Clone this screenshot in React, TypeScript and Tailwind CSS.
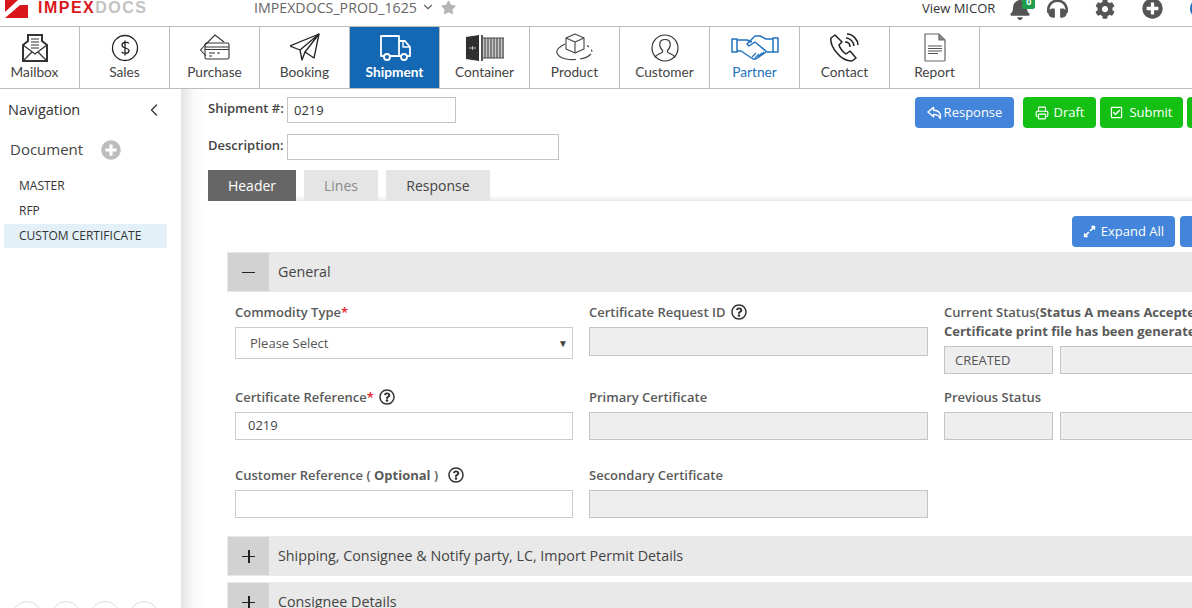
import { ReactNode } from 'react';
import { FaBell, FaHeadphones, FaCog, FaPlusCircle, FaStar, FaRegCheckSquare, FaExpandAlt, FaRegQuestionCircle } from 'react-icons/fa';
import { ChevronDown, ChevronLeft, Printer } from 'lucide-react';

const ic = 'w-[30px] h-[30px]';

const navItems: { label: string; icon: ReactNode; width: string; active?: boolean; blue?: boolean; extra?: string }[] = [
  {
    label: 'Mailbox',
    width: 'w-[80px]',
    extra: 'pr-[10px]',
    icon: (
      <svg viewBox="0 0 30 30" className={ic} fill="none" stroke="#333" strokeWidth="1.3">
        <path d="M3 12 L8 8 V2 H22 V8 L27 12 V28 H3 Z" strokeWidth="2" />
        <path d="M11 6h8M11 9h8M11 12h8M11 15h8" strokeWidth="1" />
        <path d="M3 12 L15 21 L27 12M3 28 L12 19M27 28 L18 19" />
      </svg>
    ),
  },
  {
    label: 'Sales',
    width: 'w-[90px]',
    icon: (
      <svg viewBox="0 0 30 30" className={ic} fill="none" stroke="#222" strokeWidth="1.3">
        <circle cx="15" cy="15" r="12.5" />
        <path d="M19 10.500c-1-1.500-7-2-7 1.700 0 3.600 7 2 7 5.600 0 3.400-6 3-7.400 1M15 7.500v15" />
      </svg>
    ),
  },
  {
    label: 'Purchase',
    width: 'w-[90px]',
    icon: (
      <svg viewBox="0 0 30 30" className={ic} fill="none" stroke="#333" strokeWidth="1.1">
        <path d="M6 11 L15 2 L24 9M6 23 L0.500 17 L6 11" />
        <rect x="5" y="10" width="24" height="16" rx="1.500" />
        <path d="M5 14h24M5 16.500h24" />
        <path d="M9 20h6M9 23h3M17 20h3" />
      </svg>
    ),
  },
  {
    label: 'Booking',
    width: 'w-[90px]',
    icon: (
      <svg viewBox="0 0 30 30" className={ic} fill="none" stroke="#222" strokeWidth="1.3" strokeLinejoin="round">
        <path d="M0 13 L29 1 L24 25 L15 19 L12 27 L10 17 Z" />
        <path d="M29 1 L10 17M29 1 L15 19" />
      </svg>
    ),
  },
  {
    label: 'Shipment',
    width: 'w-[90px]',
    active: true,
    icon: (
      <svg viewBox="0 0 34 30" className="w-[34px] h-[30px]" fill="none" stroke="currentColor" strokeWidth="1.800" strokeLinejoin="round">
        <path d="M6 23 H3 V3 H21 V23 H12" />
        <path d="M21 8 H27 L32 14 V23 H29 M21 23 H23" />
        <path d="M25 9 V14 H32" strokeWidth="1.400" />
        <circle cx="9" cy="24" r="3" />
        <circle cx="26" cy="24" r="3" />
      </svg>
    ),
  },
  {
    label: 'Container',
    width: 'w-[90px]',
    icon: (
      <svg viewBox="0 0 38 26" className="w-[38px] h-[26px]">
        <path d="M0 2 L13 0 V26 L0 24 Z" fill="#2f2f2f" />
        <path d="M3 13h3M7 13h3M6.500 11v4" stroke="#ddd" strokeWidth="0.800" />
        <path d="M15 0 L17 0 V26 L15 26 Z" fill="#555" />
        <path d="M17 3 H38 V23 H17 Z" fill="#c9c9c9" />
        <path d="M17 3 H38 M17 23 H38" stroke="#444" strokeWidth="1.200" />
        <path d="M19 3v20M22 3v20M25 3v20M28 3v20M31 3v20M34 3v20M37 3v20" stroke="#444" strokeWidth="1.100" />
      </svg>
    ),
  },
  {
    label: 'Product',
    width: 'w-[90px]',
    icon: (
      <svg viewBox="0 0 38 30" className="w-[38px] h-[30px]" fill="none" stroke="#444" strokeWidth="1.100" strokeLinejoin="round">
        <path d="M19 1 L28 5 V16 L19 20 L10 16 V5 Z" />
        <path d="M10 5 L19 9 L28 5M19 9 V20" />
        <path d="M9 11 C3 14 0 17 1 20 C3 26 14 27 20 26.500" />
        <path d="M24 26 C28 25.500 32 24 35 21M36 19 L35.500 16.500M33 14 L31 12.500" />
      </svg>
    ),
  },
  {
    label: 'Customer',
    width: 'w-[90px]',
    icon: (
      <svg viewBox="0 0 30 30" className={ic} fill="none" stroke="#333" strokeWidth="1.200">
        <circle cx="15" cy="15" r="13" />
        <path d="M5 24.500 C6 21 11 21 12.500 19 V17.500 C10 15 9.500 12 10 9.500 C11 5.500 19 5.500 20 9.500 C20.500 12 20 15 17.500 17.500 V19 C19 21 24 21 25 24.500" />
      </svg>
    ),
  },
  {
    label: 'Partner',
    width: 'w-[90px]',
    blue: true,
    icon: (
      <svg viewBox="0 0 48 26" className="w-[48px] h-[26px]" fill="none" stroke="#2272bd" strokeWidth="1.500" strokeLinejoin="round">
        <path d="M1 4 H6 V17 H1 Z M42 3 H47 V17 H42 Z" />
        <path d="M6 5 H16 L21 7 M42 4 H35 L29 1 H24 L16 9 L18 11 L24 7 L36 17 H42" />
        <path d="M6 16 H10 L22 24 H25 L35 17" />
        <path d="M21 22 L25 18M24 23 L28 19M27 22 L31 18M30 20 L33 17" strokeWidth="1.100" />
      </svg>
    ),
  },
  {
    label: 'Contact',
    width: 'w-[90px]',
    icon: (
      <svg viewBox="0 0 30 30" className={ic} fill="none" stroke="#222" strokeWidth="1.500" strokeLinejoin="round">
        <path d="M5 2 L1 5 C0 9 3 16 7 20 C11 25 17 28 22 28 L26 25 L20 18 L16 21 C13 19 10 15 9 12 L12 9 Z" />
        <path d="M15 9 C18 9 20 11 20 14M16 5 C20 5 24 9 24 13M17 1 C23 1 28 7 28 12" />
      </svg>
    ),
  },
  {
    label: 'Report',
    width: 'w-[90px]',
    icon: (
      <svg viewBox="0 0 24 30" className="w-[24px] h-[30px]" fill="none" stroke="#666" strokeWidth="1.200">
        <path d="M2 1 H16 L22 7 V27 Q22 28 21 28 H3 Q2 28 2 27 Z" />
        <path d="M16 1 V7 H22" fill="#888" />
        <path d="M5 13h14M5 15.500h14M5 18h14M5 20.500h10" stroke="#555" />
      </svg>
    ),
  },
];

function Help({ className = 'ml-[6px]' }: { className?: string }) {
  return <FaRegQuestionCircle className={`text-[#333] text-[16px] inline-block ${className}`} />;
}

function Field({ label, children, className = '' }: { label: ReactNode; children?: ReactNode; className?: string }) {
  return (
    <div className={className}>
      <div className="text-[13px] leading-[20px] font-semibold text-[#5a5a5a] flex items-center whitespace-pre">{label}</div>
      {children}
    </div>
  );
}

function ReadOnly({ value, className = 'w-full' }: { value?: string; className?: string }) {
  return (
    <div className={`h-[28px] border border-[#c4c4c4] bg-[#eeeeee] px-[10px] text-[13px] leading-[26px] text-[#555] ${className}`}>
      {value}
    </div>
  );
}

function Section({ title, open }: { title: string; open?: boolean }) {
  return (
    <div className="h-[40px] bg-[#e9e9e9] flex items-center pl-[1px]">
      <div className="w-[41px] h-[38px] bg-[#d2d2d2] flex items-center justify-center">
        <span className="relative block w-[13px] h-[13px]">
          <span className="absolute left-0 right-0 top-[6px] h-[1.500px] bg-[#222]" />
          {!open && <span className="absolute top-0 bottom-0 left-[6px] w-[1.500px] bg-[#222]" />}
        </span>
      </div>
      <span className="ml-[9px] -mt-[1px] text-[14.3px] text-[#444]">{title}</span>
    </div>
  );
}

export default function App() {
  return (
    <div className="w-[1192px] h-[608px] overflow-hidden bg-white flex flex-col font-['Open_Sans',sans-serif]">
      {/* top bar */}
      <div className="h-[27px] shrink-0 border-b border-[#bdbdbd] flex items-center overflow-hidden">
        <svg viewBox="0 0 23 18" className="ml-[5px] w-[23px] h-[18px] -mt-[9px] shrink-0">
          <path d="M0 18 L15 5 H23 V18 Z" fill="#d9161c" />
          <path d="M0 0 H13 L0 12 Z" fill="#d9161c" />
        </svg>
        <div className="ml-[10px] -mt-[10px] w-[216px] shrink-0 text-[16px] font-['Liberation_Sans',sans-serif] font-bold tracking-[1.500px] leading-[14px]">
          <span className="text-[#d9161c]">IMPEX</span>
          <span className="text-[#c2c2c2]">DOCS</span>
        </div>
        <span className="shrink-0 text-[14.2px] leading-[16px] text-[#666] -mt-[10px]">IMPEXDOCS_PROD_1625</span>
        <ChevronDown className="shrink-0 ml-[4px] -mt-[12px] w-[14px] h-[14px] text-[#666]" strokeWidth={2} />
        <FaStar className="shrink-0 ml-[6px] -mt-[12px] text-[15px] text-[#b5b5b5]" />
        <span className="shrink-0 ml-[466px] whitespace-nowrap text-[13px] leading-[16px] text-[#333] -mt-[10px]">View MICOR</span>
        <div className="relative shrink-0 ml-[14px] -mt-[9px]">
          <FaBell className="text-[22px] text-[#555]" />
          <span className="absolute -top-[1px] left-[13px] w-[13px] h-[12px] rounded-[2px] bg-[#1f9d4d] text-white text-[9px] leading-[10px] font-bold text-center">0</span>
        </div>
        <FaHeadphones className="shrink-0 ml-[16px] -mt-[9px] text-[21px] text-[#555]" />
        <FaCog className="shrink-0 ml-[27px] -mt-[9px] text-[20px] text-[#555]" />
        <FaPlusCircle className="shrink-0 ml-[27px] -mt-[9px] text-[21px] text-[#555]" />
        <span className="shrink-0 ml-[27px] -mt-[9px] w-[21px] h-[21px] rounded-full bg-[#2272bd]" />
      </div>

      {/* module nav */}
      <div className="h-[62px] shrink-0 border-b border-[#bdbdbd] flex font-['Lato',sans-serif]">
        {navItems.map((item) => (
          <div
            key={item.label}
            className={`${item.width} ${item.extra ?? ''} border-r border-[#bdbdbd] flex flex-col items-center pt-[6px] ${
              item.active ? 'bg-[#1467b3] text-white font-bold' : ''
            }`}
          >
            <div className="h-[30px] flex items-center justify-center">{item.icon}</div>
            <span className={`text-[13.7px] leading-[18px] ${item.active ? 'text-white' : item.blue ? 'text-[#2272bd]' : 'text-[#444]'}`}>
              {item.label}
            </span>
          </div>
        ))}
      </div>

      <div className="flex-1 flex min-h-0">
        {/* sidebar */}
        <aside className="w-[181px] shrink-0">
          <div className="h-[42px] pl-[8px] pr-[17px] flex items-center justify-between text-[14.5px] text-[#333]">
            <span>Navigation</span>
            <ChevronLeft className="w-[20px] h-[20px] text-[#333]" strokeWidth={1.500} />
          </div>
          <div className="mt-[7px] pl-[10px] flex items-center h-[24px]">
            <span className="text-[15px] text-[#444] -mt-[2px]">Document</span>
            <FaPlusCircle className="ml-[18px] text-[20px] text-[#bdbdbd]" />
          </div>
          <div className="mt-[11px] text-[12px] text-[#333]">
            <div className="h-[25px] pl-[19px] leading-[25px]">MASTER</div>
            <div className="h-[25px] pl-[19px] leading-[25px]">RFP</div>
            <div className="mt-[1px] ml-[4px] w-[163px] h-[24px] pl-[15px] leading-[24px] bg-[#e3f0f8]">CUSTOM CERTIFICATE</div>
          </div>
          <div className="mt-[353px] pl-[12px] flex gap-[9px]">
            {[0, 1, 2, 3].map((i) => (
              <span key={i} className="shrink-0 w-[30px] h-[30px] rounded-full border border-[#ddd]" />
            ))}
          </div>
        </aside>

        {/* gutter shadow */}
        <div className="w-[26px] shrink-0 bg-gradient-to-r from-[#e4e4e4] via-[#fafafa] to-white" />

        {/* main */}
        <main className="flex-1 min-w-0 overflow-hidden">
          <div className="h-[81px] shrink-0 flex justify-between">
            <div className="pt-[8px]">
              <div className="flex items-center h-[26px]">
                <label className="w-[80px] pl-[1px] -mt-[2px] text-[13px] font-semibold text-[#444]">Shipment #:</label>
                <div className="w-[169px] h-[26px] border border-[#c4c4c4] px-[6px] text-[13px] leading-[24px] text-[#333]">0219</div>
              </div>
              <div className="mt-[11px] flex items-center h-[26px]">
                <label className="w-[80px] pl-[1px] -mt-[2px] text-[13px] font-semibold text-[#444]">Description:</label>
                <div className="w-[272px] h-[26px] border border-[#c4c4c4]" />
              </div>
            </div>
            <div className="pt-[8px] flex items-start text-[13px] text-white -mr-[4px]">
              <button className="w-[99px] h-[31px] rounded-[4px] bg-[#4285da] flex items-center justify-center gap-[2px]">
                <svg viewBox="0 0 16 14" className="w-[15px] h-[14px]" fill="none" stroke="currentColor" strokeWidth="1.500" strokeLinejoin="round">
                  <path d="M1 6 L7 1 V4 C12 4 15.500 7 14 13 C13 9.500 11 8.500 7 8.500 V11 Z" />
                </svg>
                Response
              </button>
              <button className="ml-[9px] w-[73px] h-[31px] rounded-[4px] bg-[#14c014] flex items-center justify-center gap-[5px]">
                <Printer className="w-[14px] h-[14px]" strokeWidth={2} /> Draft
              </button>
              <button className="ml-[4px] w-[83px] h-[31px] rounded-[4px] bg-[#14c014] flex items-center justify-center gap-[6px]">
                <FaRegCheckSquare className="text-[13px]" /> Submit
              </button>
              <button className="ml-[4px] w-[9px] h-[31px] rounded-l-[4px] bg-[#14c014]" />
            </div>
          </div>

          <div className="flex items-end h-[31px] text-[14px]">
            <div className="ml-[1px] w-[88px] h-[31px] bg-[#666] text-white text-center leading-[31px]">Header</div>
            <div className="ml-[8px] w-[74px] h-[31px] bg-[#e5e5e5] text-[#8a8a8a] text-center leading-[31px]">Lines</div>
            <div className="ml-[8px] w-[104px] h-[31px] bg-[#e5e5e5] text-[#444] text-center leading-[31px]">Response</div>
          </div>

          <div className="w-[1100px] bg-white shadow-[0_0_6px_rgba(0,0,0,0.2)] pl-[20px] pt-[15px]">
            <div className="flex justify-start pl-[845px] text-[13px] text-white">
              <button className="w-[103px] h-[31px] rounded-[4px] bg-[#4285da] flex items-center justify-center gap-[5px]">
                <FaExpandAlt className="text-[13px]" /> Expand All
              </button>
              <button className="ml-[5px] w-[103px] h-[31px] rounded-[4px] bg-[#4285da]" />
            </div>

            <div className="mt-[5px]">
              <Section title="General" open />
            </div>

            <div className="pl-[8px] pt-[10px] grid grid-cols-[338px_339px_400px] grid-rows-[85px_78px_auto] gap-x-[16px]">
              <Field label={<span>Commodity Type<span className="text-[#e8232a]">*</span></span>}>
                <div className="mt-[5px] h-[32px] border border-[#c9ccd1] pl-[14px] pr-[4px] flex items-center justify-between text-[13px] text-[#555]">
                  <span className="mt-[1px]">Please Select</span>
                  <span className="text-[10px] text-[#444]">▼</span>
                </div>
              </Field>
              <Field label={<>Certificate Request ID<Help /></>}>
                <div className="mt-[5px] h-[29px] border border-[#c4c4c4] bg-[#eeeeee]" />
              </Field>
              <div className="mt-[1px]">
                <div className="w-[400px] whitespace-nowrap text-[13px] leading-[19px] font-semibold text-[#5a5a5a]">
                  <div>
                    Current Status(<span className="font-bold">Status A means Accepted and</span>
                  </div>
                  <div className="font-bold">Certificate print file has been generated</div>
                </div>
                <div className="mt-[5px] flex gap-[7px]">
                  <ReadOnly value="CREATED" className="w-[109px]" />
                  <ReadOnly className="w-[200px]" />
                </div>
              </div>

              <Field label={<span className="flex items-center">Certificate Reference<span className="text-[#e8232a]">*</span><Help className="ml-[5px]" /></span>}>
                <div className="mt-[5px] h-[28px] border border-[#c9ccd1] pl-[12px] text-[13px] leading-[25px] text-[#444]">0219</div>
              </Field>
              <Field label="Primary Certificate">
                <ReadOnly className="w-full mt-[5px]" />
              </Field>
              <Field label="Previous Status">
                <div className="mt-[5px] flex gap-[7px]">
                  <ReadOnly className="w-[109px]" />
                  <ReadOnly className="w-[200px]" />
                </div>
              </Field>

              <Field label={<>Customer Reference ( <span className="font-bold">Optional</span> )<Help className="ml-[10px]" /></>}>
                <div className="mt-[5px] h-[28px] border border-[#c9ccd1]" />
              </Field>
              <Field label="Secondary Certificate">
                <ReadOnly className="w-full mt-[5px]" />
              </Field>
            </div>

            <div className="mt-[18px]">
              <Section title="Shipping, Consignee & Notify party, LC, Import Permit Details" />
            </div>
            <div className="mt-[6px]">
              <Section title="Consignee Details" />
            </div>
          </div>
        </main>
      </div>
    </div>
  );
}
